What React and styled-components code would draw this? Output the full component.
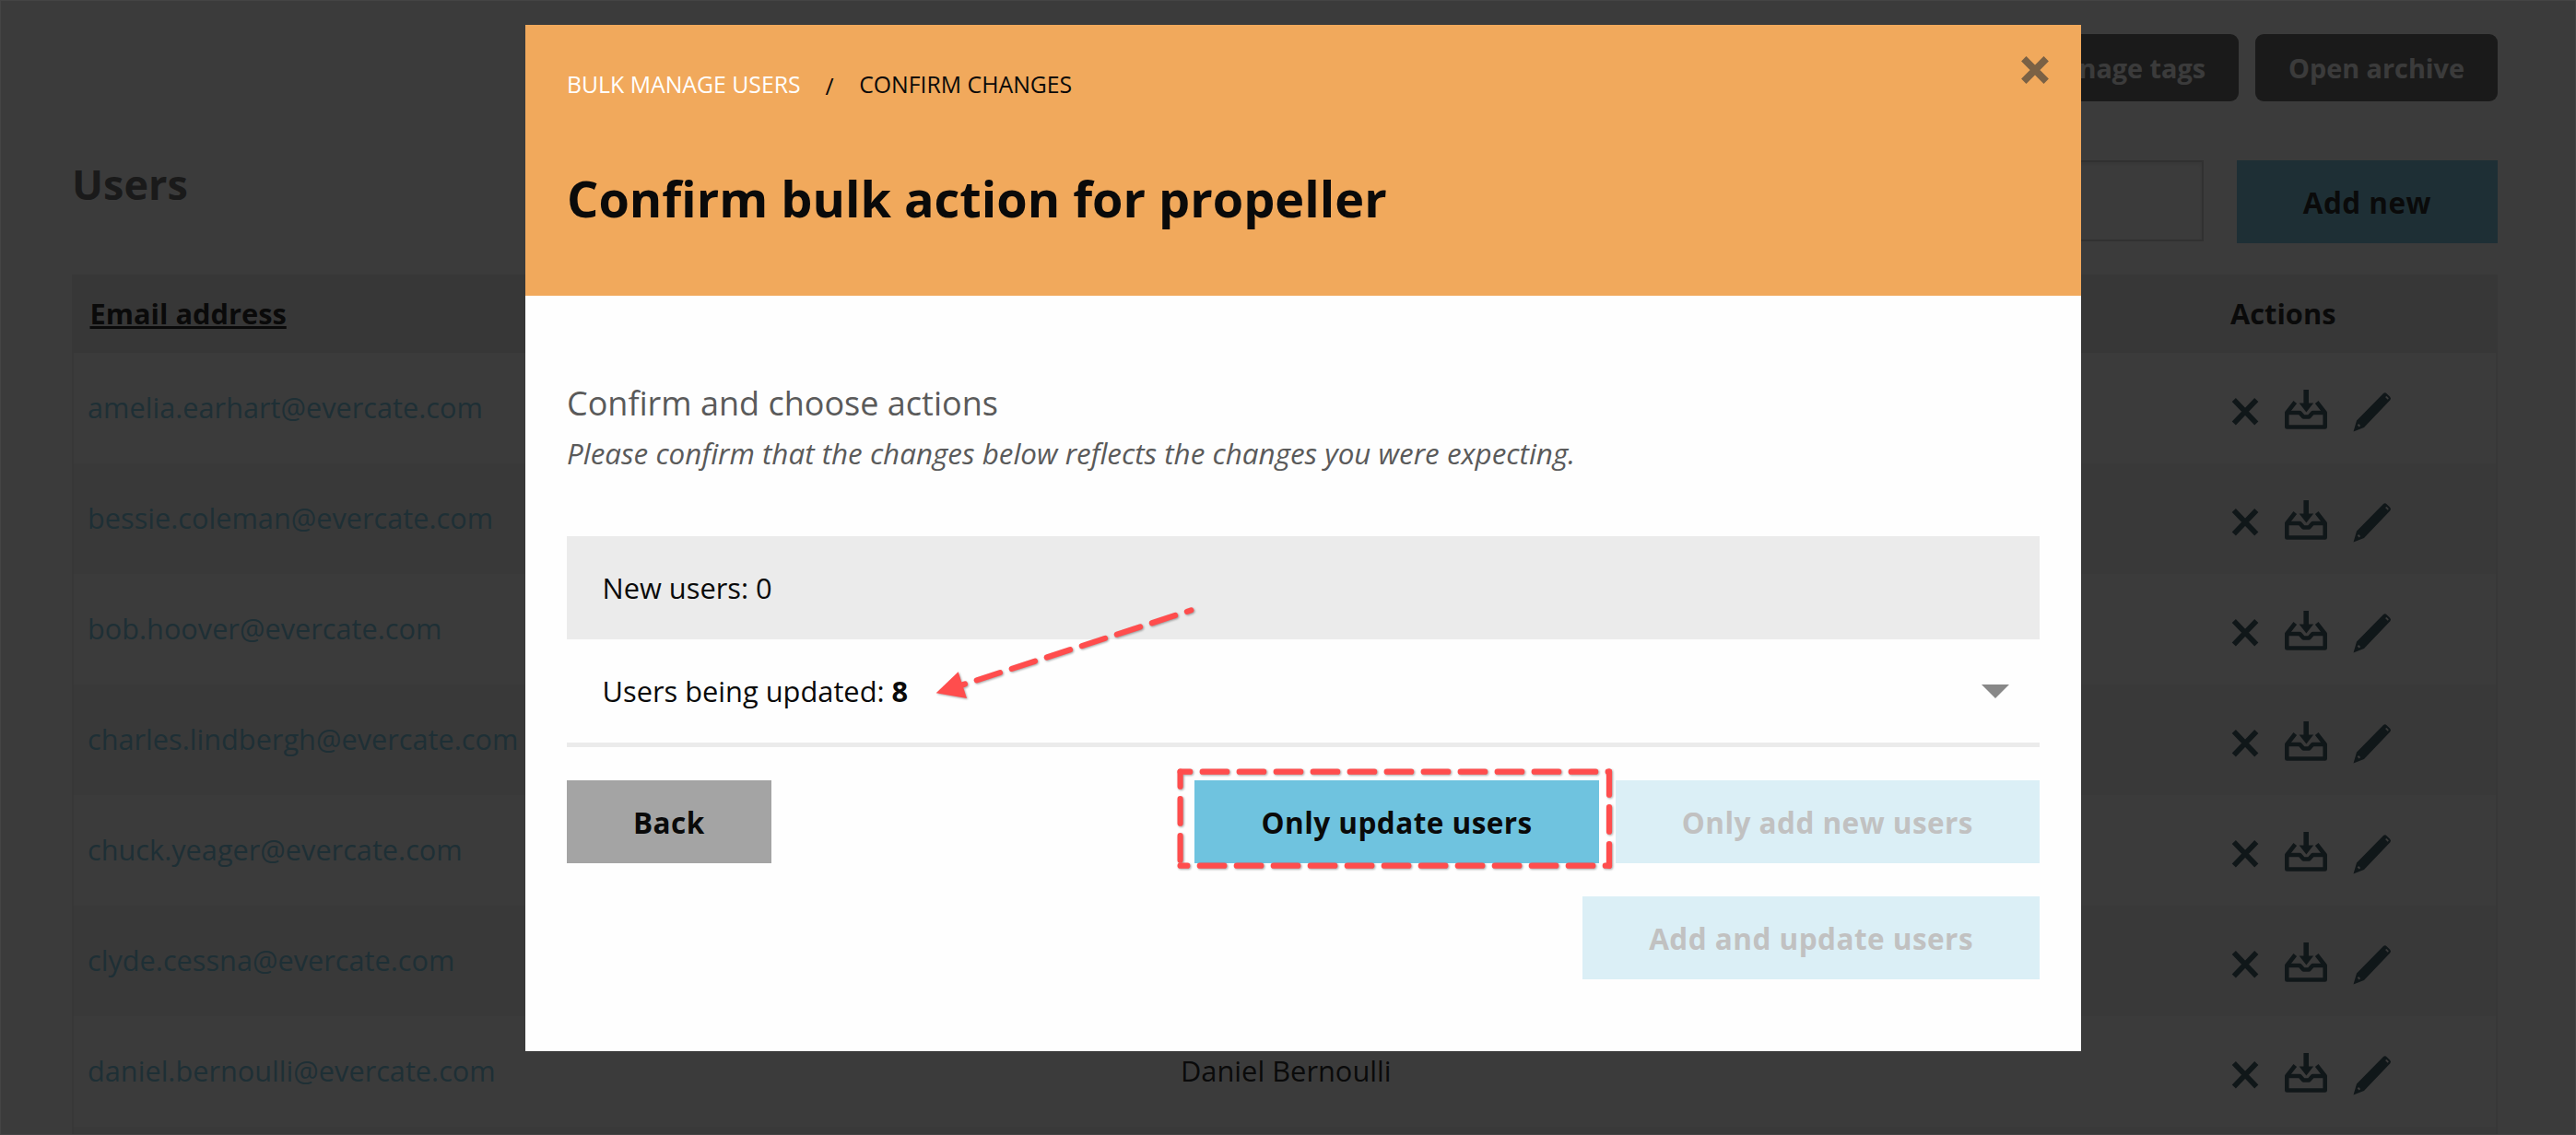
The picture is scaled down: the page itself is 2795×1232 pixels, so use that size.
import React from 'react';
import styled, { createGlobalStyle } from 'styled-components';

const GlobalStyle = createGlobalStyle`
    * {
        box-sizing: border-box;
    }
    body {
        margin: 0;
        font-family: 'Open Sans', 'Noto Sans', sans-serif;
        font-size: 30.8px;
        color: #0a0a0a;
        background: #fff;
    }
`

const Page = styled.div`
    position: relative;
    height: 1232px;
    padding: 37px 85px 0 78px;
    overflow: hidden;
`
const Toolbar = styled.div`
    display: flex;
    justify-content: flex-end;
    gap: 18px;
`
const ToolButton = styled.button`
    height: 73px;
    padding: 0 36px 1px;
    border: none;
    border-radius: 9px;
    background: #5c5c5c;
    color: #fff;
    font-family: inherit;
    font-size: 28.8px;
    font-weight: 700;
`
const TitleBar = styled.div`
    display: flex;
    align-items: flex-start;
    margin-top: 64px;
`
const PageTitle = styled.h1`
    flex: 1;
    margin: 1px 0 0;
    color: #5c5c5c;
    font-size: 45px;
    font-weight: 700;
    line-height: 50px;
`
const Search = styled.input`
    width: 600px;
    height: 88px;
    margin-right: 36px;
    border: 2px solid #cacaca;
    background: #fff;
    box-shadow: inset 0 2px 4px rgba(10, 10, 10, 0.1);
`
const Button = styled.button`
    height: 90px;
    padding: 1px 72px 0;
    border: none;
    background: ${(props) => props.$bg || '#6fc3df'};
    color: #0a0a0a;
    font-family: inherit;
    font-size: 31.5px;
    font-weight: 700;
    letter-spacing: 0.46px;
    white-space: nowrap;

    &:disabled {
        background: #dbeff6;
        color: #c1c1c1;
    }
`
const Table = styled.div`
    margin-top: 34px;
    border: 2px solid #ebebeb;
    border-top: none;
`
const Row = styled.div`
    display: grid;
    grid-template-columns: 1186px 1139px 1fr;
    align-items: center;
    height: 120px;
    background: ${(props) => (props.$alt ? '#f4f4f4' : '#fff')};
`
const HeadRow = styled(Row)`
    height: 85px;
    background: #ebebeb;
    font-weight: 700;
`
const Cell = styled.div`
    padding: 0 15px 2px;
`
const HeadCell = styled.div`
    padding: 0 15px 2px;
`
const SortLink = styled.span`
    margin-left: 2.5px;
    text-decoration: underline;
    text-decoration-thickness: 3px;
    text-underline-offset: 2px;
    text-decoration-skip-ink: none;
`
const Email = styled.a`
    color: #6fc3df;
    font-size: 30.7px;
`
const Actions = styled.div`
    display: flex;
    gap: 26px;
    padding: 6px 0 0 15px;
    color: #2c4a54;

    svg {
        display: block;
    }
`
const Overlay = styled.div`
    position: absolute;
    inset: 0;
    background: rgba(10, 10, 10, 0.8);
    box-shadow: inset 0 0 0 1px #444;
`
const Modal = styled.div`
    position: absolute;
    top: 27px;
    left: 570px;
    width: 1688px;
    height: 1114px;
    background: #fefefe;
`
const ModalHeader = styled.div`
    display: flex;
    justify-content: space-between;
    height: 294px;
    padding: 46px 35px 0 45px;
    background: #f1a95c;
`
const Breadcrumbs = styled.div`
    display: flex;
    font-size: 24.8px;
    line-height: 36px;
`
const Crumb = styled.span`
    color: ${(props) => (props.$link ? '#fff' : '#0a0a0a')};
`
const Slash = styled.span`
    margin: 2px 27.5px 0 27px;
`
const ModalTitle = styled.h2`
    margin: 67px 0 0;
    font-size: 54px;
    font-weight: 700;
    line-height: 74px;
`
const Close = styled.button`
    width: 30px;
    height: 30px;
    margin-top: -12px;
    padding: 0;
    border: none;
    background: none;
    color: #7a6145;

    svg {
        display: block;
    }
`
const ModalBody = styled.div`
    padding: 92px 45px 0;
`
const Lead = styled.div`
    color: #5a5a5a;
    font-size: 36px;
    line-height: 50px;
`
const Note = styled.div`
    margin: 6px 0 67px;
    color: #5a5a5a;
    font-size: 31.4px;
    font-style: italic;
    line-height: 46px;
`
const Summary = styled.div`
    border-bottom: 5px solid #ebebeb;
`
const SummaryRow = styled.div`
    display: flex;
    align-items: center;
    justify-content: space-between;
    height: 112px;
    padding: 0 33px 0 38.5px;
    background: ${(props) => (props.$shaded ? '#ebebeb' : 'transparent')};
`
const Caret = styled.span`
    border: 15.5px solid transparent;
    border-top-color: #888;
    border-bottom: none;
`
const Footer = styled.div`
    display: flex;
    align-items: flex-start;
    justify-content: space-between;
    margin-top: 36px;
`
const FooterActions = styled.div`
    display: flex;
    flex-wrap: wrap;
    justify-content: flex-end;
    gap: 36px 18px;
    width: 1000px;
`
const Annotations = styled.svg`
    position: absolute;
    inset: 0;
    pointer-events: none;
    filter: drop-shadow(1px 1px 1px rgba(0, 0, 0, 0.35));
`

const users = [
  { email: 'amelia.earhart@evercate.com' },
  { email: 'bessie.coleman@evercate.com' },
  { email: 'bob.hoover@evercate.com' },
  { email: 'charles.lindbergh@evercate.com' },
  { email: 'chuck.yeager@evercate.com' },
  { email: 'clyde.cessna@evercate.com' },
  { email: 'daniel.bernoulli@evercate.com', name: 'Daniel Bernoulli' },
  { email: '' },
];

const RemoveIcon = () => (
  <svg width="32" height="48" viewBox="0 0 32 48" stroke="currentColor" strokeWidth="5.8">
    <path d="M3.8 12l24.500 25.500M28.300 12L3.800 37.500" />
  </svg>
)

const ArchiveIcon = () => (
  <svg width="48" height="48" viewBox="0 0 48 48" fill="none" stroke="currentColor" strokeWidth="4.6">
    <path d="M12.3 14.5L3.3 26v15.5h41.4V26l-9-11.5" strokeLinejoin="round" />
    <path d="M3.3 26h14l4 4.500h6l4-4.500h13.400" strokeLinejoin="round" />
    <path d="M24.2 1v18" strokeWidth="5.6" />
    <path d="M16.6 15.5h15.600l-7.800 10z" fill="currentColor" stroke="none" />
  </svg>
)

const EditIcon = () => (
  <svg width="44" height="48" viewBox="0 0 44 48" fill="currentColor">
    <path fillRule="evenodd" d="M1.5 46.500L5 34.500 34 5q2-1.500 3.600.2l3.600 3.600q1.600 1.800.2 3.400L13 42zM36 9l2.800 2.800 1-1.500-2.300-2.300zM5.800 39.500l2 2 1.300-1.500-2-2z" />
  </svg>
)

const CloseIcon = () => (
  <svg width="30" height="30" viewBox="0 0 30 30" stroke="currentColor" strokeWidth="7.6">
    <path d="M2.8 2.8l24.400 24.400M27.200 2.800L2.800 27.200" />
  </svg>
)

const App = () => {
  return (
    <Page>
      <GlobalStyle />
      <Toolbar>
        <ToolButton>Manage tags</ToolButton>
        <ToolButton>Open archive</ToolButton>
      </Toolbar>
      <TitleBar>
        <PageTitle>Users</PageTitle>
        <Search />
        <Button>Add new</Button>
      </TitleBar>
      <Table>
        <HeadRow>
          <HeadCell><SortLink>Email address</SortLink></HeadCell>
          <HeadCell />
          <HeadCell>Actions</HeadCell>
        </HeadRow>
        {users.map((user, i) => (
          <Row key={i} $alt={i % 2 === 1}>
            <Cell><Email>{user.email}</Email></Cell>
            <Cell>{user.name}</Cell>
            <Actions>
              <RemoveIcon />
              <ArchiveIcon />
              <EditIcon />
            </Actions>
          </Row>
        ))}
      </Table>
      <Overlay>
        <Modal>
          <ModalHeader>
            <div>
              <Breadcrumbs>
                <Crumb $link>BULK MANAGE USERS</Crumb>
                <Slash>/</Slash>
                <Crumb>CONFIRM CHANGES</Crumb>
              </Breadcrumbs>
              <ModalTitle>Confirm bulk action for propeller</ModalTitle>
            </div>
            <Close><CloseIcon /></Close>
          </ModalHeader>
          <ModalBody>
            <Lead>Confirm and choose actions</Lead>
            <Note>Please confirm that the changes below reflects the changes you were expecting.</Note>
            <Summary>
              <SummaryRow $shaded>New users: 0</SummaryRow>
              <SummaryRow>
                <span>Users being updated: <b>8</b></span>
                <Caret />
              </SummaryRow>
            </Summary>
            <Footer>
              <Button $bg="#a4a4a4">Back</Button>
              <FooterActions>
                <Button>Only update users</Button>
                <Button disabled>Only add new users</Button>
                <Button disabled>Add and update users</Button>
              </FooterActions>
            </Footer>
          </ModalBody>
          {/* arrow to the updated count and frame round the update button */}
          <Annotations width="1688" height="1114" viewBox="570 27 1688 1114" fill="none" stroke="#ff4d4d" strokeWidth="6.2" strokeLinecap="round" strokeDasharray="26.5 13.5">
            <path d="M1292.3 662.4L1044 743.5" strokeDashoffset="21.9" />
            <path d="M1015.7 752.3L1039.7 729.3L1049 758z" fill="#ff4d4d" stroke="none" />
            <path d="M1280.6 837.7H1746" strokeDashoffset="15.9" />
            <path d="M1746 837.7V939.7" strokeDashoffset="1.5" />
            <path d="M1280.6 939.7H1746" strokeDashoffset="18.8" />
            <path d="M1280.6 837.7V939.7" strokeDashoffset="10.5" />
          </Annotations>
        </Modal>
      </Overlay>
    </Page>
  )
};

export default App;
